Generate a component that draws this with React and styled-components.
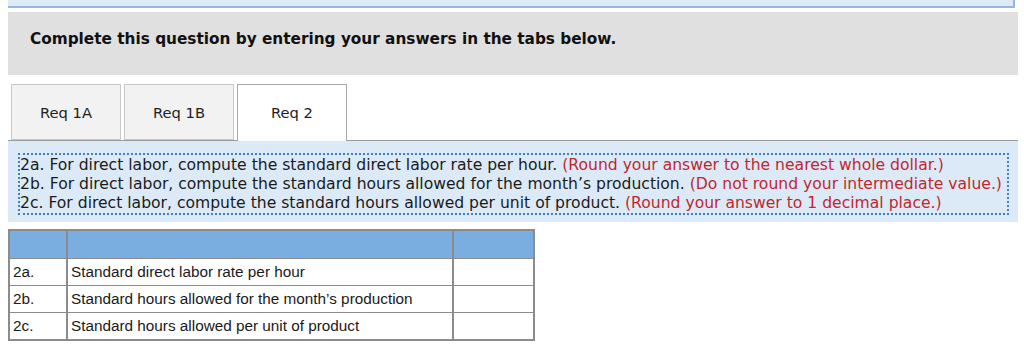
import React from "react";
import styled, { createGlobalStyle } from "styled-components";

const GlobalStyle = createGlobalStyle`
  body {
    margin: 0;
    background: #ffffff;
    font-family: "DejaVu Sans", Verdana, sans-serif;
  }
`;

const tabs = [
  { label: "Req 1A", active: false },
  { label: "Req 1B", active: false },
  { label: "Req 2", active: true },
];

const instructions = [
  {
    text: "2a. For direct labor, compute the standard direct labor rate per hour.",
    note: "(Round your answer to the nearest whole dollar.)",
  },
  {
    text: "2b. For direct labor, compute the standard hours allowed for the month\u2019s production.",
    note: "(Do not round your intermediate value.)",
  },
  {
    text: "2c. For direct labor, compute the standard hours allowed per unit of product.",
    note: "(Round your answer to 1 decimal place.)",
  },
];

const rows = [
  { id: "2a.", label: "Standard direct labor rate per hour" },
  { id: "2b.", label: "Standard hours allowed for the month\u2019s production" },
  { id: "2c.", label: "Standard hours allowed per unit of product" },
];

const App = () => {
  return (
    <Page>
      <GlobalStyle />
      <TopStrip />
      <Banner>Complete this question by entering your answers in the tabs below.</Banner>

      <TabBar>
        {tabs.map((tab) => (
          <Tab key={tab.label} active={tab.active}>
            {tab.label}
          </Tab>
        ))}
      </TabBar>

      <Panel>
        <Instructions>
          {instructions.map((item) => (
            <Line key={item.text}>
              {item.text} <Note>{item.note}</Note>
            </Line>
          ))}
        </Instructions>
      </Panel>

      <AnswerTable>
        <thead>
          <tr>
            <HeadCell style={{ width: 56 }} />
            <HeadCell style={{ width: 384 }} />
            <HeadCell />
          </tr>
        </thead>
        <tbody>
          {rows.map((row) => (
            <tr key={row.id}>
              <Cell>{row.id}</Cell>
              <Cell>{row.label}</Cell>
              <Cell />
            </tr>
          ))}
        </tbody>
      </AnswerTable>
    </Page>
  );
};

const Page = styled.div`
  padding: 0 6px 0 8px;
  width: 1010px;
`;

const TopStrip = styled.div`
  height: 6px;
  width: 1005px;
  background: #dceaf7;
  border-right: 2px solid #94b7dc;
  border-bottom: 2px solid #94b7dc;
`;

const Banner = styled.div`
  margin-top: 4px;
  height: 63px;
  box-sizing: border-box;
  background: #e0e0e0;
  padding: 18px 0 0 22px;
  font-size: 15.3px;
  font-weight: bold;
  line-height: 18px;
  color: #111111;
`;

const TabBar = styled.div`
  display: flex;
  gap: 3px;
  margin-top: 9px;
  padding-left: 3px;
  border-bottom: 1px solid #9a9a9a;
  height: 56px;
`;

const Tab = styled.div`
  width: 110px;
  height: ${(p) => (p.active ? "57px" : "56px")};
  box-sizing: border-box;
  display: flex;
  align-items: center;
  justify-content: center;
  background: ${(p) => (p.active ? "#ffffff" : "#f2f2f2")};
  border: 1px solid ${(p) => (p.active ? "#a8a8a8" : "#c8c8c8")};
  border-bottom: ${(p) => (p.active ? "none" : "1px solid #c8c8c8")};
  padding-bottom: ${(p) => (p.active ? "2px" : "0")};
  font-size: 14.7px;
  color: #222222;
  position: relative;
  z-index: 1;
`;

const Panel = styled.div`
  background: #dceaf7;
  padding: 12px 9px 7px 10px;
  height: 81px;
  box-sizing: border-box;
`;

const Instructions = styled.div`
  border: 2px dotted #3f80c8;
  padding: 1px 0 0 0;
  font-size: 15.6px;
  line-height: 19px;
  color: #1a1a1a;
  white-space: nowrap;
`;

const Line = styled.div``;

const Note = styled.span`
  color: #c0272d;
`;

const AnswerTable = styled.table`
  margin-top: 7px;
  width: 527px;
  border-collapse: collapse;
  font-family: "Liberation Sans", Arial, sans-serif;
  font-size: 15.3px;
  color: #1a1a1a;
  border: 2px solid #8c8c8c;
`;

const HeadCell = styled.th`
  background: #7aaee1;
  height: 27px;
  padding: 0;
  border: 1px solid #8c8c8c;
  border-width: 1px 2px 1px 1px;
`;

const Cell = styled.td`
  height: 26px;
  padding: 0 3px;
  border: 1px solid #8c8c8c;
  border-right-width: 2px;
  background: #ffffff;
`;

export default App;
